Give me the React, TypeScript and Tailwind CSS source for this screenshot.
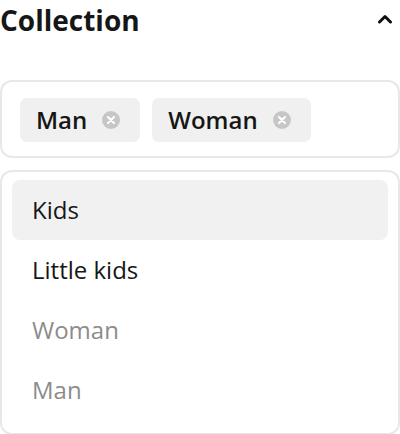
import { useState } from "react";

function RemoveIcon() {
  return (
    <svg width="18" height="18" viewBox="0 0 18 18" className="shrink-0">
      <circle cx="9" cy="9" r="9" fill="#c6c6c6" />
      <path
        d="M6 6 L12 12 M12 6 L6 12"
        stroke="#fff"
        strokeWidth="2.2"
        strokeLinecap="round"
      />
    </svg>
  );
}

function ChevronUp() {
  return (
    <svg width="16" height="10" viewBox="0 0 16 10">
      <path
        d="M2.5 8 L8 2.5 L13.5 8"
        fill="none"
        stroke="#111"
        strokeWidth="3"
        strokeLinecap="round"
        strokeLinejoin="round"
      />
    </svg>
  );
}

export default function App() {
  const [selected] = useState(["Man", "Woman"]);
  const options = [
    { label: "Kids", disabled: false, active: true },
    { label: "Little kids", disabled: false, active: false },
    { label: "Woman", disabled: true, active: false },
    { label: "Man", disabled: true, active: false },
  ];

  return (
    <div
      className="w-[400px] h-[434px] bg-white text-[#161616] overflow-hidden"
      style={{ fontFamily: '"Open Sans", "Noto Sans", sans-serif' }}
    >
      <div className="flex items-center justify-between h-[40px]">
        <h2 className="text-[28px] font-bold leading-[40px] -mt-[1px]">Collection</h2>
        <div className="mr-[7px] -mt-[3px]">
          <ChevronUp />
        </div>
      </div>

      <div className="mt-[40px] border-2 border-[#e8e8e8] rounded-[12px] pt-4 pb-[14px] pl-[18px] pr-4 flex gap-[12px]">
        {selected.map((s) => (
          <div
            key={s}
            className="h-[44px] flex items-center gap-[15px] bg-[#f0f0f0] rounded-[7px] pl-4 pr-5"
          >
            <span className="text-[24px] font-semibold leading-none">{s}</span>
            <RemoveIcon />
          </div>
        ))}
      </div>

      <div className="mt-[12px] border-2 border-[#e8e8e8] rounded-[12px] px-[10px] pt-[8px] pb-[13px]">
        {options.map((o) => (
          <div
            key={o.label}
            className={
              "h-[60px] flex items-center px-5 rounded-[8px] text-[24px] " +
              (o.active ? "bg-[#f1f1f1] " : "") +
              (o.disabled ? "text-[#8c8c8c]" : "text-[#161616]")
            }
          >
            {o.label}
          </div>
        ))}
      </div>
    </div>
  );
}
